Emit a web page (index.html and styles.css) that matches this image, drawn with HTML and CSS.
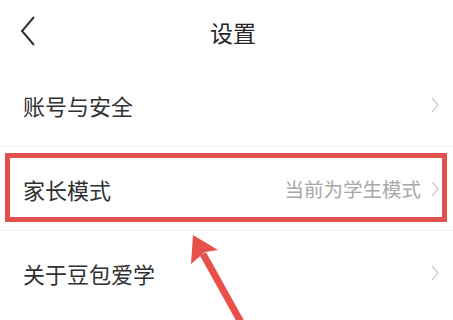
FILE: index.html
```html
<!DOCTYPE html>
<html lang="zh">
<head>
<meta charset="utf-8">
<link rel="stylesheet" href="styles.css">
</head>
<body>
<div class="page">
  <header class="header">
    <svg class="back" width="16" height="30" viewBox="0 0 16 30"><polyline points="14,1 2,15 14,29" fill="none" stroke="#333" stroke-width="2" stroke-linejoin="miter"/></svg>
    <div class="title">设置</div>
  </header>
  <div class="row">
    <span class="label">账号与安全</span>
    <span class="right"><svg class="chev" width="8" height="16" viewBox="0 0 8 16"><polyline points="1,1 7,8 1,15" fill="none" stroke="#cfcfcf" stroke-width="1.4"/></svg></span>
  </div>
  <div class="row">
    <span class="label">家长模式</span>
    <span class="right"><span class="value">当前为学生模式</span><svg class="chev" width="8" height="16" viewBox="0 0 8 16"><polyline points="1,1 7,8 1,15" fill="none" stroke="#cfcfcf" stroke-width="1.4"/></svg></span>
  </div>
  <div class="row last">
    <span class="label">关于豆包爱学</span>
    <span class="right"><svg class="chev" width="8" height="16" viewBox="0 0 8 16"><polyline points="1,1 7,8 1,15" fill="none" stroke="#cfcfcf" stroke-width="1.4"/></svg></span>
  </div>
  <div class="highlight"></div>
  <svg class="arrow" width="453" height="320" viewBox="0 0 453 320">
    <line x1="203" y1="254" x2="242" y2="324" stroke="#e8504a" stroke-width="7"/>
    <polygon points="193,235 218,250 205,252 191,264" fill="#e8504a"/>
  </svg>
</div>
</body>
</html>
```
FILE: styles.css
```css
html, body {
  margin: 0;
  padding: 0;
  background: #ffffff;
}
.page {
  position: relative;
  width: 453px;
  height: 320px;
  overflow: hidden;
  font-family: "Noto Sans CJK SC", "Noto Sans", sans-serif;
}
.header {
  height: 63px;
  display: flex;
  align-items: center;
  justify-content: center;
  position: relative;
}
.back {
  position: absolute;
  left: 20px;
  top: 16px;
}
.title {
  font-size: 23px;
  color: #262626;
  line-height: 1;
  margin-top: 2px;
  margin-left: 13px;
}
.row {
  height: 84px;
  display: flex;
  align-items: center;
  justify-content: space-between;
  padding: 0 14px 0 23px;
  border-bottom: 1px solid #f3f3f3;
  box-sizing: border-box;
}
.row.last {
  border-bottom: none;
}
.label {
  font-size: 22px;
  color: #303030;
  line-height: 1;
}
.right {
  display: flex;
  align-items: center;
  gap: 10px;
}
.value {
  font-size: 19.5px;
  color: #a8a8a8;
  line-height: 1;
}
.chev {
  display: block;
}
.highlight {
  position: absolute;
  left: 5px;
  top: 153px;
  width: 442px;
  height: 69px;
  box-sizing: border-box;
  border: 5px solid #e0514d;
}
.arrow {
  position: absolute;
  left: 0;
  top: 0;
}
```
